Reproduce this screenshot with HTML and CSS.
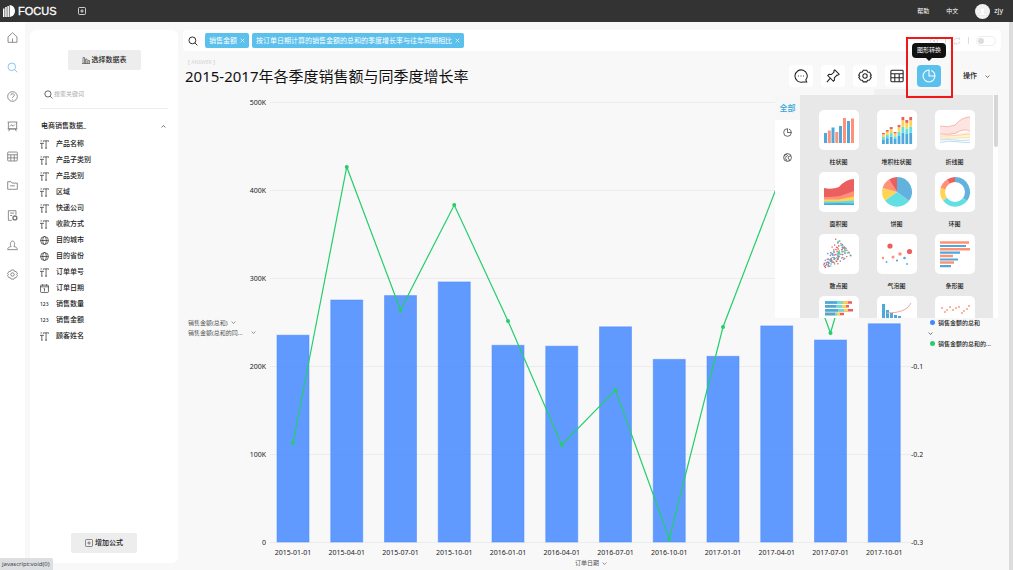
FILE: index.html
```html
<!DOCTYPE html>
<html lang="zh-CN">
<head>
<meta charset="utf-8">
<title>FOCUS</title>
<link rel="stylesheet" href="styles.css">
</head>
<body>
<svg class="sprite" aria-hidden="true">
  <symbol id="i-search" viewBox="0 0 16 16"><circle cx="7" cy="7" r="5.5"/><path d="M11 11l4 4"/></symbol>
  <symbol id="i-home" viewBox="0 0 16 16"><path d="M1.5 7L8 1l6.500 6v8h-13zM8 9.500v5.500"/></symbol>
  <symbol id="i-help" viewBox="0 0 16 16"><circle cx="8" cy="8" r="7"/><path d="M5.500 6.300a2.500 2.300 0 1 1 3.600 2c-.8.400-1.100.8-1.100 1.700M8 11.500v1"/></symbol>
  <symbol id="i-board" viewBox="0 0 16 16"><path d="M1 1.500h14M2 1.500v10h12v-10M4 11.500L2.500 15M12 11.500l1.500 3.500M4.500 8l2-2.500 2.500 2 2.500-2.500M1 11.500h14"/></symbol>
  <symbol id="i-table" viewBox="0 0 16 16"><rect x="1" y="1.500" width="14" height="13" rx="1"/><path d="M1 5.500h14M1 10h14M5.500 5.500v9M10.500 5.500v9"/></symbol>
  <symbol id="i-folder" viewBox="0 0 16 16"><path d="M1 13.500v-11h5l1.500 2H15v9zM4.500 8.500h7"/></symbol>
  <symbol id="i-doc" viewBox="0 0 16 16"><path d="M7 15H2V1h11v6M4.500 4.500h6M4.500 8h3"/><circle cx="11.500" cy="11.500" r="2.800" stroke-width="2"/></symbol>
  <symbol id="i-user" viewBox="0 0 16 16"><path d="M6 9.500C4.500 8 4.300 1.500 8 1.500s3.500 6.500 2 8M6 9.500c-3 .5-4.800 1.500-5 4.500h14c-.2-3-2-4-5-4.500"/></symbol>
  <symbol id="i-gear" viewBox="0 0 16 16"><path d="M6 1.500h4l1 2 2.300.2 1.900 3.300-1.200 1 1.200 1.500-2 3.200-2.200.1-1 1.900H6l-1-1.900-2.200-.1-2-3.200L2 8 .8 7l1.900-3.300L5 3.500z"/><circle cx="8" cy="8" r="2.500"/></symbol>
  <symbol id="i-text" viewBox="0 0 16 16"><path d="M6 3V1.500h9.500V3M10.800 1.500v13M9 14.500h3.500M.5 7V5.800H6V7M3.200 5.800v8.700M2 14.500h2.500M1 1.500h2.500"/></symbol>
  <symbol id="i-globe" viewBox="0 0 16 16"><circle cx="8" cy="8" r="7"/><ellipse cx="8" cy="8" rx="3.200" ry="7"/><path d="M1 8h14"/></symbol>
  <symbol id="i-date" viewBox="0 0 16 16"><rect x="1" y="2" width="14" height="13" rx="1.500"/><path d="M1 5h14M4.500.5V3M11.500.5V3M6.500 8H8v5"/></symbol>
  <symbol id="i-plus" viewBox="0 0 16 16"><rect x="1" y="1" width="14" height="14" rx="2"/><path d="M8 4.500v7M4.500 8h7"/></symbol>
  <symbol id="i-down" viewBox="0 0 16 16"><path d="M2 5l6 6 6-6"/></symbol>
  <symbol id="i-pie" viewBox="0 0 16 16"><path d="M8 1.200A6.800 6.800 0 1 0 14.800 8H8zM10.500 1.700a6.800 6.800 0 0 1 4.300 6.300"/></symbol>
</svg>

<header class="topbar">
  <a class="brand" href="#">
    <svg class="brand-mark" viewBox="0 0 12 12"><path d="M0 3.500h1.500V12H0zM2.200 2h1.500v10H2.200zM4.400 1h1.500v11H4.400zM6.600 0C13.800.5 13.800 11.500 6.600 12z"/></svg>
    FOCUS
  </a>
  <button class="new-tab" aria-label="新建"><svg class="icon icon-s"><use href="#i-plus"/></svg></button>
  <nav class="top-links">
    <a href="#">帮助</a>
    <a href="#">中文</a>
    <a class="account" href="#">
      <svg class="avatar" viewBox="0 0 16 16"><circle cx="8" cy="8" r="8" fill="#f2f2f2"/><path d="M5.500 7c0-4 5-4 5 0 0 1-.5 2-1 2.500 2 .5 3 1 3.500 2.500H3c.5-1.500 1.500-2 3.500-2.500-.5-.5-1-1.500-1-2.500z" fill="#fff" stroke="#ddd" stroke-width=".5"/></svg>
      zjy
    </a>
  </nav>
</header>

<div class="shell">
  <nav class="rail">
    <a href="#" aria-label="首页"><svg class="icon"><use href="#i-home"/></svg></a>
    <a href="#" class="current" aria-label="搜索"><svg class="icon"><use href="#i-search"/></svg></a>
    <a href="#" aria-label="问答"><svg class="icon"><use href="#i-help"/></svg></a>
    <a href="#" aria-label="看板"><svg class="icon"><use href="#i-board"/></svg></a>
    <a href="#" aria-label="数据表"><svg class="icon"><use href="#i-table"/></svg></a>
    <a href="#" aria-label="文件夹"><svg class="icon"><use href="#i-folder"/></svg></a>
    <a href="#" aria-label="文档"><svg class="icon"><use href="#i-doc"/></svg></a>
    <a href="#" aria-label="用户"><svg class="icon"><use href="#i-user"/></svg></a>
    <a href="#" aria-label="设置"><svg class="icon"><use href="#i-gear"/></svg></a>
  </nav>

  <aside class="source">
    <button class="soft-button">
      <svg class="icon icon-s thin" viewBox="0 0 16 16"><path d="M0 15h16M2 15V3h3v12M7 15V6h3v9M12 15V9h3v6"/></svg>选择数据表
    </button>
    <label class="field-search"><svg class="icon icon-m"><use href="#i-search"/></svg><input type="text" placeholder="搜索关键词"></label>
    <button class="group">电商销售数据_<svg class="icon icon-xs flip"><use href="#i-down"/></svg></button>
    <ul class="fields">
      <li><svg class="icon icon-m"><use href="#i-text"/></svg>产品名称</li>
      <li><svg class="icon icon-m"><use href="#i-text"/></svg>产品子类别</li>
      <li><svg class="icon icon-m"><use href="#i-text"/></svg>产品类别</li>
      <li><svg class="icon icon-m"><use href="#i-text"/></svg>区域</li>
      <li><svg class="icon icon-m"><use href="#i-text"/></svg>快递公司</li>
      <li><svg class="icon icon-m"><use href="#i-text"/></svg>收款方式</li>
      <li><svg class="icon icon-m"><use href="#i-globe"/></svg>目的城市</li>
      <li><svg class="icon icon-m"><use href="#i-globe"/></svg>目的省份</li>
      <li><svg class="icon icon-m"><use href="#i-text"/></svg>订单单号</li>
      <li><svg class="icon icon-m"><use href="#i-date"/></svg>订单日期</li>
      <li><span class="numeric">123</span>销售数量</li>
      <li><span class="numeric">123</span>销售金额</li>
      <li><svg class="icon icon-m"><use href="#i-text"/></svg>顾客姓名</li>
    </ul>
    <button class="soft-button formula"><svg class="icon icon-s thin"><use href="#i-plus"/></svg>增加公式</button>
  </aside>

  <main class="content">
    <div class="query">
      <svg class="icon icon-l"><use href="#i-search"/></svg>
      <button class="tag">销售金额<svg class="icon icon-xs" viewBox="0 0 16 16"><path d="M2 2l12 12M14 2L2 14"/></svg></button>
      <button class="tag">按订单日期计算的销售金额的总和的季度增长率与往年同期相比<svg class="icon icon-xs" viewBox="0 0 16 16"><path d="M2 2l12 12M14 2L2 14"/></svg></button>
      <div class="query-tools">
        <svg class="icon icon-s" viewBox="0 0 16 16"><circle cx="8" cy="8" r="7"/><path d="M5 5l6 6M11 5l-6 6"/></svg>
        <i class="bar"></i>
        <svg class="icon icon-s" viewBox="0 0 16 16"><path d="M2 7a6 6 0 0 1 11-2V1M14 9a6 6 0 0 1-11 2v4"/></svg>
        <i class="bar"></i>
        <input class="toggle" type="checkbox" aria-label="自动刷新">
      </div>
    </div>

    <div class="heading">
      <div class="heading-text">
        <span class="kind">【 ANSWER 】</span>
        <h1>2015-2017年各季度销售额与同季度增长率</h1>
      </div>
      <div class="tools">
        <button class="tool" aria-label="评论"><svg class="icon icon-t" viewBox="0 0 16 16"><path d="M13.500 12.500A7 7 0 1 0 10 14.800h4.500zM4.500 8h1M7.500 8h1M10.500 8h1"/></svg></button>
        <button class="tool" aria-label="固定"><svg class="icon icon-t" viewBox="0 0 16 16"><path d="M10 1l5 5-1.500 1.200-1-.2-3 3.200.2 2.500L8.500 14 2 7.500 3.500 6l2.700.3L9.200 3.500 9 2zM5 10.500L1 15"/></svg></button>
        <button class="tool" aria-label="设置"><svg class="icon icon-t"><use href="#i-gear"/></svg></button>
        <button class="tool" aria-label="数据表"><svg class="icon icon-t"><use href="#i-table"/></svg></button>
        <div class="switcher">
          <button class="tool active" aria-label="图形转换"><svg class="icon icon-t"><use href="#i-pie"/></svg></button>
          <span class="tooltip">图形转换</span>
          <span class="marker"></span>
        </div>
        <button class="more">操作<svg class="icon icon-xs"><use href="#i-down"/></svg></button>
      </div>
    </div>

    <section class="chart">
      <div class="axis-names">
        <button class="axis-name">销售金额(总和)<svg class="icon icon-xs"><use href="#i-down"/></svg></button>
        <button class="axis-name wide">销售金额(总和的同...<svg class="icon icon-xs"><use href="#i-down"/></svg></button>
      </div>
      <div class="plot-column">
        <svg class="plot" id="plot" viewBox="0 0 678 464"></svg>
        <button class="axis-name">订单日期<svg class="icon icon-xs"><use href="#i-down"/></svg></button>
      </div>
      <div class="legend">
        <span class="key"><i class="dot blue"></i>销售金额的总和</span>
        <svg class="icon icon-xs"><use href="#i-down"/></svg>
        <span class="key"><i class="dot green"></i>销售金额的总和的...</span>
      </div>
    </section>

    <div class="picker">
      <div class="picker-tabs">
        <button class="picker-tab selected">全部</button>
        <button class="picker-tab" aria-label="图表"><svg class="icon icon-m"><use href="#i-pie"/></svg></button>
        <button class="picker-tab" aria-label="地图"><svg class="icon icon-m" viewBox="0 0 16 16"><circle cx="8" cy="8" r="7"/><path d="M2 5l4-3 2 2-2 3-3 .5M10 6l4-1M10 6l-1 3 2 2v3M3 10l3 1 1 3"/></svg></button>
      </div>
      <div class="picker-grid">
        <button class="type"><svg viewBox="0 0 40 40"><g fill="#4fa8dc"><path d="M5 23h3v10H5zM12.500 17.500h3V33h-3zM20 16h3v17h-3zM28 11h3v22h-3z"/></g><path fill="#ff9177" d="M8.800 20.500h3V33h-3zM16.300 22h3v11h-3zM24 8h3v25h-3zM32 8.500h3V33h-3z"/></svg>柱状图</button>
        <button class="type"><svg viewBox="0 0 40 40" data-thumb="stack"></svg>堆积柱状图</button>
        <button class="type"><svg viewBox="0 0 40 40"><path fill="#fde4e0" d="M5 16q8 2 15-1 7-8 15-8v13q-7-1-14 4-8 1-16 0z"/><path fill="#fff3dc" d="M5 26q15 0 30-5v8q-15-1-30 0z"/><g fill="none" stroke-width=".8"><path stroke="#f4a9a0" d="M5 16q8 2 15-1 7-8 15-8M5 24q10 1 16-1 7-5 14-2"/><path stroke="#ffc7a6" d="M5 26q15 0 30-2"/><path stroke="#ffdf9b" d="M5 28q15 1 30-1"/><path stroke="#a8d5f0" d="M5 30q8-1 15 0t15 0M5 32.500q8-2 15-1t15 1"/></g></svg>折线图</button>
        <button class="type"><svg viewBox="0 0 40 40"><path fill="#ec5f5f" d="M5 16q8 2 15-1 7-8 15-8v26H5z"/><path fill="#ff9177" d="M5 25q10 0 16-1l14-5v14H5z"/><path fill="#ffd452" d="M5 27.500h15l15-3V33H5z"/><path fill="#5edce0" d="M5 29.500h15l15-1V33H5z"/><path fill="#4fa8dc" d="M5 31.500l15-.5 15 .5V33H5z"/></svg>面积图</button>
        <button class="type"><svg viewBox="0 0 40 40"><path fill="#62b1df" d="M20 20V5a15 15 0 0 1 12 24z"/><path fill="#62dfe3" d="M20 20l12 9a15 15 0 0 1-24-.5z"/><path fill="#ffd452" d="M20 20L8 28.500A15 15 0 0 1 5.500 16z"/><path fill="#ff9177" d="M20 20L5.500 16A15 15 0 0 1 12 7.500z"/><path fill="#ec5f5f" d="M20 20L12 7.500A15 15 0 0 1 20 5z"/></svg>饼图</button>
        <button class="type"><svg viewBox="0 0 40 40"><path fill="#62b1df" d="M20 20V5a15 15 0 0 1 12 24z"/><path fill="#62dfe3" d="M20 20l12 9a15 15 0 0 1-24-.5z"/><path fill="#ffd452" d="M20 20L8 28.500A15 15 0 0 1 5.500 16z"/><path fill="#ff9177" d="M20 20L5.500 16A15 15 0 0 1 12 7.500z"/><path fill="#ec5f5f" d="M20 20L12 7.500A15 15 0 0 1 20 5z"/><circle cx="20" cy="20" r="10" fill="#fff"/></svg>环图</button>
        <button class="type"><svg viewBox="0 0 40 40" data-thumb="scatter"></svg>散点图</button>
        <button class="type"><svg viewBox="0 0 40 40"><g fill="#ec5f5f"><circle cx="13" cy="12" r="2.600"/><circle cx="32.500" cy="17.500" r="2.600"/></g><g fill="#ff9177"><circle cx="23" cy="20" r="1.800"/><circle cx="16" cy="23" r="1.500"/><circle cx="6" cy="24" r="1.200"/></g><g fill="#4fa8dc"><circle cx="20" cy="26.500" r="1.100"/><circle cx="27.500" cy="24" r="1.300"/><circle cx="9.500" cy="28" r=".9"/><circle cx="30" cy="30" r=".9"/></g></svg>气泡图</button>
        <button class="type"><svg viewBox="0 0 40 40"><path stroke="#ff9177" stroke-width="2.400" d="M5 8.500h29M5 15.300h30M5 22h13M5 28.500h14"/><path stroke="#4fa8dc" stroke-width="2.200" d="M5 12h26M5 18.700h20M5 25.500h18M5 32.200h11"/></svg>条形图</button>
        <button class="type" aria-label="堆积条形图"><svg viewBox="0 0 40 40"><g stroke-width="2.600"><path stroke="#ec5f5f" d="M6 6.500h27M6 10.300h24M6 14.200h28M6 18h19"/><path stroke="#ffd452" d="M6 6.500h23M6 10.300h21M6 14.200h23M6 18h15"/><path stroke="#62dfe3" d="M6 6.500h18M6 10.300h17M6 14.200h19M6 18h12"/><path stroke="#4fa8dc" d="M6 6.500h12M6 10.300h11M6 14.200h13M6 18h10"/></g></svg></button>
        <button class="type" aria-label="帕累托图"><svg viewBox="0 0 40 40"><path fill="#4fa8dc" d="M5 8h3v25H5zM9 14h3v19H9zM13 17h3v16h-3zM17 19h3v14h-3zM21 20h3v13h-3z"/><path fill="none" stroke="#f4a9a0" d="M10 17q20 0 24-10"/></svg></button>
        <button class="type" aria-label="时序散点图"><svg viewBox="0 0 40 40"><g fill="#ff9177"><circle cx="7" cy="12" r=".9"/><circle cx="10" cy="16" r=".9"/><circle cx="12" cy="14" r=".9"/><circle cx="15" cy="11" r=".9"/><circle cx="18" cy="14" r=".9"/><circle cx="21" cy="12" r=".9"/><circle cx="24" cy="11" r=".9"/><circle cx="27" cy="17" r=".9"/><circle cx="29" cy="15" r=".9"/><circle cx="32" cy="13" r=".9"/><circle cx="34" cy="10" r=".9"/></g></svg></button>
      </div>
      <div class="picker-scroll"><i></i></div>
    </div>
  </main>
  <div class="page-scroll"></div>
</div>
<div class="status">javascript:void(0)</div>
<script src="app.js"></script>
</body>
</html>
```
FILE: styles.css
```css
* { box-sizing: border-box; }
body {
  margin: 0;
  height: 100vh;
  display: flex;
  flex-direction: column;
  background: #f8f8f8;
  color: #222;
  font: 7px/10px "Noto Sans", "Noto Sans CJK SC", sans-serif;
}
button, input {
  font: inherit;
  color: inherit;
  border: 0;
  padding: 0;
  margin: 0;
  background: none;
}
a { color: inherit; text-decoration: none; }
.sprite { display: none; }
.icon {
  width: 11px;
  height: 11px;
  flex: none;
  fill: none;
  stroke: currentColor;
  stroke-width: 1.2;
}
.icon-xs { width: 5px; height: 5px; stroke-width: 2; }
.icon-s { width: 8px; height: 8px; stroke-width: 1.5; }
.icon-m { width: 9px; height: 9px; stroke-width: 1.2; }
.icon-l { width: 10px; height: 10px; stroke-width: 1.5; }
.icon-t { width: 14px; height: 14px; }
.thin { stroke-width: 1; }
.flip { transform: rotate(180deg); }

.topbar {
  flex: none;
  height: 22px;
  display: flex;
  align-items: center;
  padding: 0 10px 0 3px;
  background: #333;
  color: #fff;
}
.brand {
  display: flex;
  align-items: center;
  gap: 3px;
  font: 11px/14px "Liberation Sans", sans-serif;
  -webkit-text-stroke: 0.3px #fff;
}
.brand-mark { width: 12px; height: 12px; fill: #fff; }
.new-tab { display: flex; margin-left: 21px; }
.top-links {
  margin-left: auto;
  display: flex;
  align-items: center;
  gap: 17px;
  font-size: 6px;
}
.account { display: flex; align-items: center; gap: 4px; font-size: 7px; }
.avatar { width: 15px; height: 15px; }

.shell { flex: 1; min-height: 0; display: flex; }
.rail {
  width: 25px;
  flex: none;
  background: #fff;
  color: #777;
}
.rail {
  display: flex;
  flex-direction: column;
  align-items: center;
}
.rail a {
  flex: 0 1 30px;
  display: flex;
  align-items: center;
}
.rail a:nth-child(3n) { flex-basis: 29px; }
.rail .current { color: #6bbdec; }

.source {
  width: 148px;
  flex: none;
  margin: 8px 5px 7px;
  padding: 20px 10px 10px;
  display: flex;
  flex-direction: column;
  background: #fff;
  border-radius: 6px;
}
.soft-button {
  align-self: center;
  width: 73px;
  height: 20px;
  display: flex;
  align-items: center;
  justify-content: center;
  gap: 2px;
  background: #ededed;
  border-radius: 2px;
  font-weight: 500;
}
.formula { width: 66px; margin-top: auto; }
.field-search {
  margin-top: 14px;
  padding: 0 4px 4px;
  height: 25px;
  display: flex;
  align-items: center;
  gap: 1px;
  border-bottom: 1px solid #eee;
}
.field-search input { width: 100%; min-width: 0; font-size: 6px; }
.field-search input::placeholder { color: #aaa; opacity: 1; }
.group {
  margin-top: 12px;
  padding: 0 2px 0 1px;
  display: flex;
  align-items: center;
  justify-content: space-between;
  font-weight: 500;
}
.fields { list-style: none; margin: 5px 0 0; padding: 0; }
.fields li {
  height: 16px;
  display: flex;
  align-items: center;
  gap: 7px;
  font-weight: 500;
}
.numeric { width: 9px; font-size: 5px; }

.content {
  position: relative;
  flex: 1;
  min-width: 0;
  padding: 8px 8px 0 0;
}
.query {
  height: 21px;
  display: flex;
  align-items: center;
  gap: 3px;
  padding: 0 5px;
  background: #fff;
  border-radius: 4px;
}
.query > .icon-l { margin-right: 4px; }
.tag {
  height: 15px;
  display: flex;
  align-items: center;
  gap: 3px;
  padding: 0 4px;
  background: #5bc0ec;
  border-radius: 2px;
  color: #fff;
  white-space: nowrap;
}
.query-tools {
  margin-left: auto;
  display: flex;
  align-items: center;
  gap: 7px;
  color: #ccc;
}
.bar { width: 1px; height: 7px; background: #ddd; }
.toggle {
  appearance: none;
  width: 20px;
  height: 10px;
  padding: 1px;
  border: 1px solid #eee;
  border-radius: 5px;
}
.toggle::before {
  content: "";
  display: block;
  width: 6px;
  height: 6px;
  border-radius: 50%;
  background: #ddd;
}
.heading { display: flex; align-items: flex-end; padding-top: 8px; }
.heading-text { display: flex; flex-direction: column; padding: 0 0 1px 2px; }
.kind { font-size: 5px; line-height: 7px; color: #d4d4d4; }
h1 { margin: 0; font-size: 15px; font-weight: 400; line-height: 20px; color: #111; white-space: nowrap; }
.tools {
  margin-left: auto;
  padding-right: 11px;
  display: flex;
  align-items: center;
  gap: 8px;
}
.tool {
  width: 24px;
  height: 22px;
  display: flex;
  align-items: center;
  justify-content: center;
  background: #fff;
  border-radius: 4px;
}
.tool.active { background: #5bc0ec; color: #fff; }
.switcher { position: relative; }
.switcher::before {
  content: "";
  position: absolute;
  left: -43px;
  top: 24px;
  width: 76px;
  height: 6px;
  background: #f0f0f0;
  border-radius: 3px 3px 0 0;
}
.tooltip {
  position: absolute;
  left: -5px;
  bottom: 29px;
  width: 34px;
  height: 15px;
  background: #111;
  color: #fff;
  border-radius: 4px;
  font-size: 6px;
  line-height: 15px;
  text-align: center;
}
.tooltip::after {
  content: "";
  position: absolute;
  left: 14px;
  top: 15px;
  border: 3px solid transparent;
  border-top-color: #111;
}
.marker {
  position: absolute;
  inset: -28px -12px -11px -11px;
  border: 2px solid #f01818;
  z-index: 3;
  pointer-events: none;
}
.more { display: flex; align-items: center; gap: 8px; margin-left: 14px; font-weight: 500; }

.chart {
  display: grid;
  grid-template-columns: 62px minmax(0, 1fr) 78px;
  padding-top: 7px;
}
.axis-names {
  display: flex;
  flex-direction: column;
  justify-content: center;
  padding: 0 0 7px 5px;
}
.axis-name {
  display: flex;
  align-items: center;
  gap: 3px;
  color: #555;
  font-size: 6px;
  line-height: 10px;
  white-space: nowrap;
}
.plot-column { display: flex; flex-direction: column; align-items: center; }
.plot-column .axis-name { margin-left: 14px; }
.wide { gap: 8px; }
.plot { width: 100%; }
.plot text { font-size: 7px; fill: #222; }
.grid-line { stroke: #ececec; }
.bar-shape { fill: #4388ff; fill-opacity: .84; stroke: #4388ff; stroke-opacity: .5; }
.trend { fill: none; stroke: #24ce6b; stroke-width: 1.2; }
.trend-dot { fill: #24ce6b; }
.end { text-anchor: end; }
.middle { text-anchor: middle; }
.legend {
  display: flex;
  flex-direction: column;
  justify-content: center;
  gap: 3px;
  padding: 4px 0 0 5px;
  font-size: 6px;
  font-weight: 500;
  white-space: nowrap;
}
.key { display: flex; align-items: center; gap: 3px; padding-left: 2px; }
.dot { width: 5px; height: 5px; border-radius: 50%; }
.blue { background: #4388ff; }
.green { background: #24ce6b; }

.picker {
  position: absolute;
  top: 73px;
  right: 11px;
  width: 223px;
  height: 223px;
  display: flex;
  overflow: hidden;
  background: #fff;
}
.picker-tabs { width: 25px; flex: none; }
.picker-tab {
  width: 100%;
  height: 25px;
  display: flex;
  align-items: center;
  justify-content: center;
}
.picker-tab.selected { background: #f7f7f7; color: #35a6dc; font-size: 8px; font-weight: 500; }
.picker-grid {
  flex: 1;
  display: grid;
  grid-template-columns: repeat(3, 58px);
  grid-auto-rows: 62px;
  align-content: start;
  justify-content: center;
  padding-top: 15px;
  background: #e8e8e8;
}
.type {
  display: flex;
  flex-direction: column;
  align-items: center;
  gap: 7px;
  font-size: 6px;
  line-height: 10px;
  font-weight: 500;
}
.type svg { width: 40px; height: 40px; flex: none; background: #fff; border-radius: 5px; }
.picker-scroll { width: 5px; padding-left: 1px; }
.picker-scroll i { display: block; height: 52px; background: #d6d6d6; border-radius: 0 0 2px 2px; }
.page-scroll { width: 4px; flex: none; background: #dcdcdc; }
.status {
  position: absolute;
  left: 0;
  bottom: 0;
  height: 12px;
  padding: 0 3px 0 2px;
  background: #dcdfe2;
  border-radius: 0 2px 0 0;
  color: #444;
  font-size: 6px;
  line-height: 12px;
}
```
FILE: app.js
```js
const NS = "http://www.w3.org/2000/svg";

function draw(parent, tag, attrs, text) {
  const node = document.createElementNS(NS, tag);
  for (const name in attrs) node.setAttribute(name, attrs[name]);
  if (text !== undefined) node.textContent = text;
  parent.appendChild(node);
}

const quarters = [
  ["2015-01-01", 235, 349], ["2015-04-01", 275, 73], ["2015-07-01", 280, 216],
  ["2015-10-01", 295.5, 111], ["2016-01-01", 223.5, 227], ["2016-04-01", 222.5, 351],
  ["2016-07-01", 244.5, 296], ["2016-10-01", 207.5, 445], ["2017-01-01", 211, 233],
  ["2017-04-01", 245.5, 93], ["2017-07-01", 229.5, 239], ["2017-10-01", 248, 56]
];
const plot = document.getElementById("plot");
const base = 448;
const centre = i => 48 + i * 53.75;

["0", "100K", "200K", "300K", "400K", "500K"].forEach((label, i) => {
  const y = base - i * 88;
  draw(plot, "line", { x1: 25, x2: 666, y1: y + 0.5, y2: y + 0.5, class: "grid-line" });
  draw(plot, "text", { x: 21, y: y + 3, class: "end" }, label);
});
["-0.3", "-0.2", "-0.1"].forEach((label, i) => {
  draw(plot, "text", { x: 666, y: base - i * 88 + 3 }, label);
});
quarters.forEach(([date, thousands], i) => {
  const height = thousands * 0.88;
  draw(plot, "rect", { x: centre(i) - 16, y: base - height, width: 32, height, class: "bar-shape" });
  draw(plot, "text", { x: centre(i), y: base + 13, class: "middle" }, date);
});
draw(plot, "polyline", { points: quarters.map((q, i) => centre(i) + "," + q[2]).join(" "), class: "trend" });
quarters.forEach((q, i) => draw(plot, "circle", { cx: centre(i), cy: q[2], r: 2, class: "trend-dot" }));

const stack = document.querySelector('[data-thumb="stack"]');
[11, 14, 17, 12, 19, 27, 24, 27].forEach((total, i) => {
  let y = 34;
  [["#4fa8dc", 0.42], ["#62dfe3", 0.22], ["#ffd452", 0.24], ["#ec5f5f", 0.12]].forEach(([fill, share]) => {
    const height = total * share;
    y -= height;
    draw(stack, "rect", { x: 5 + i * 3.9, y, width: 2.8, height, fill });
  });
});

const scatter = document.querySelector('[data-thumb="scatter"]');
const tints = ["#ec5f5f", "#4fa8dc", "#7fc98a", "#4fa8dc", "#ec5f5f"];
let seed = 7;
const random = () => (seed = (seed * 16807) % 2147483647) / 2147483647;
for (let i = 0; i < 130; i++) {
  const t = Math.pow(random(), 0.8);
  const spread = (random() + random() - 1) * (3 + t * 11);
  draw(scatter, "circle", {
    cx: 6 + t * 20 + spread * 0.7, cy: 33 - t * 21 + spread * 0.7,
    r: 0.8, fill: tints[i % tints.length]
  });
}
```
